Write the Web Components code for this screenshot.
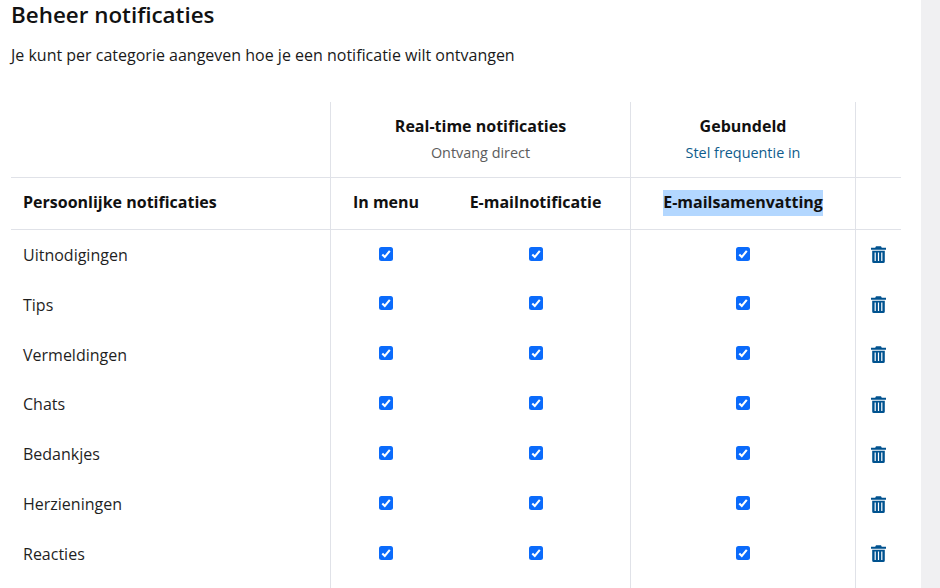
<!DOCTYPE html>
<html lang="nl">
<head>
<meta charset="utf-8">
<title>Beheer notificaties</title>
<style>
    html, body { margin: 0; height: 588px; overflow: hidden; background: #f0f0f2; }
    body { font-family: "Open Sans", "Noto Sans", sans-serif; color: #1a1a1a; }
</style>
</head>
<body>
<notif-page>
    <span slot="title">Beheer notificaties</span>
    <span slot="intro">Je kunt per categorie aangeven hoe je een notificatie wilt ontvangen</span>
    <notif-table></notif-table>
</notif-page>

<script>
class NotifPage extends HTMLElement {
    constructor() {
        super();
        this.attachShadow({ mode: 'open' });
        this.shadowRoot.innerHTML = `
            <style>
                :host {
                    display: block;
                    width: 921px;
                    height: 588px;
                    box-sizing: border-box;
                    padding: 0 20px 0 11px;
                    background: #fff;
                    overflow: hidden;
                }
                h1 {
                    margin: 0;
                    font-size: 22.4px;
                    line-height: 30px;
                    font-weight: 600;
                    color: #111;
                }
                p {
                    margin: 14px 0 36px;
                    font-size: 16px;
                    line-height: 22px;
                    color: #1a1a1a;
                }
            </style>
            <h1><slot name="title"></slot></h1>
            <p><slot name="intro"></slot></p>
            <slot></slot>
        `;
    }
}

class NotifCheck extends HTMLElement {
    constructor() {
        super();
        this.attachShadow({ mode: 'open' });
        this.shadowRoot.innerHTML = `
            <style>
                :host { display: block; width: 14px; height: 14px; }
                svg { display: block; }
            </style>
            <svg width="14" height="14" viewBox="0 0 14 14">
                <rect width="14" height="14" rx="2.5" fill="#0b6bfb"/>
                <path d="M3.3 7.4 5.8 10 10.8 3.9" fill="none" stroke="#fff" stroke-width="2.1"/>
            </svg>
        `;
    }
}

class NotifTrash extends HTMLElement {
    constructor() {
        super();
        this.attachShadow({ mode: 'open' });
        this.shadowRoot.innerHTML = `
            <style>
                :host { display: block; width: 15px; height: 17px; }
                svg { display: block; }
            </style>
            <svg width="15" height="17" viewBox="0 0 15 17">
                <path fill="#00528f" fill-rule="evenodd" d="M5 0.3h5l0.8 1.5H15v1.9H0V1.8h4.2z
                    M1.2 4.7h12.6v10.8a1.5 1.5 0 0 1-1.5 1.5H2.7a1.5 1.5 0 0 1-1.5-1.5z
                    M3.6 6.6v8.5h1.2V6.6z M6.9 6.6v8.5h1.2V6.6z M10.2 6.6v8.5h1.2V6.6z"/>
            </svg>
        `;
    }
}

// one row of the table, the cells are built from the label attribute
class NotifRow extends HTMLElement {
    constructor() {
        super();
        this.attachShadow({ mode: 'open' });
        const label = this.getAttribute('label') || '';
        this.shadowRoot.innerHTML = `
            <style>
                :host {
                    display: grid;
                    grid-template-columns: var(--cols);
                    height: 49.83px;
                }
                div {
                    display: flex;
                    align-items: center;
                    justify-content: center;
                }
                .label { justify-content: flex-start; padding-left: 12px; font-size: 16px; color: #1f1f1f; }
                .line { border-right: 1px solid #e0e2e8; }
                .check { padding-bottom: 2.73px; }
            </style>
            <div class="label line">${label}</div>
            <div class="check"><notif-check></notif-check></div>
            <div class="check line"><notif-check></notif-check></div>
            <div class="check line"><notif-check></notif-check></div>
            <div><notif-trash></notif-trash></div>
        `;
    }
}

class NotifTable extends HTMLElement {
    constructor() {
        super();
        this.attachShadow({ mode: 'open' });
        const rows = ['Uitnodigingen', 'Tips', 'Vermeldingen', 'Chats', 'Bedankjes', 'Herzieningen', 'Reacties'];
        this.shadowRoot.innerHTML = `
            <style>
                :host {
                    display: block;
                    --cols: 320px 110px 190px 225px 45px;
                }
                .head, .sub, .tail {
                    display: grid;
                    grid-template-columns: var(--cols);
                }
                .head, .sub { border-bottom: 1px solid #e0e2e8; }
                .head { height: 75px; }
                .sub { height: 51px; font-size: 16px; font-weight: 700; color: #111; }
                .tail { height: 30px; }
                .head > div, .sub > div {
                    display: flex;
                    flex-direction: column;
                    align-items: center;
                    justify-content: center;
                }
                .head > div { padding-bottom: 2px; }
                .sub > div { padding-bottom: 3px; }
                .sub > div.picked { padding-bottom: 1px; }
                .line { border-right: 1px solid #e0e2e8; }
                .wide { grid-column: span 2; }
                .head b { font-size: 16px; line-height: 24px; font-weight: 700; color: #111; }
                .head small { margin-top: 5px; font-size: 14.4px; line-height: 20px; color: #5c5c5c; }
                .head small.link { color: #0f5c8c; }
                .sub .name { align-items: flex-start; padding-left: 12px; }
                mark {
                    display: inline-block;
                    line-height: 24px;
                    padding-bottom: 2px;
                    background: #b3d7ff;
                    color: inherit;
                }
            </style>
            <div class="head">
                <div class="line"></div>
                <div class="line wide"><b>Real-time notificaties</b><small>Ontvang direct</small></div>
                <div class="line"><b>Gebundeld</b><small class="link">Stel frequentie in</small></div>
                <div></div>
            </div>
            <div class="sub">
                <div class="name line">Persoonlijke notificaties</div>
                <div>In menu</div>
                <div class="line">E-mailnotificatie</div>
                <div class="line picked"><mark>E-mailsamenvatting</mark></div>
                <div></div>
            </div>
            ${rows.map(r => `<notif-row label="${r}"></notif-row>`).join('')}
            <div class="tail">
                <div class="line"></div>
                <div></div>
                <div class="line"></div>
                <div class="line"></div>
            </div>
        `;
    }
}

customElements.define('notif-check', NotifCheck);
customElements.define('notif-trash', NotifTrash);
customElements.define('notif-row', NotifRow);
customElements.define('notif-table', NotifTable);
customElements.define('notif-page', NotifPage);
</script>
</body>
</html>
